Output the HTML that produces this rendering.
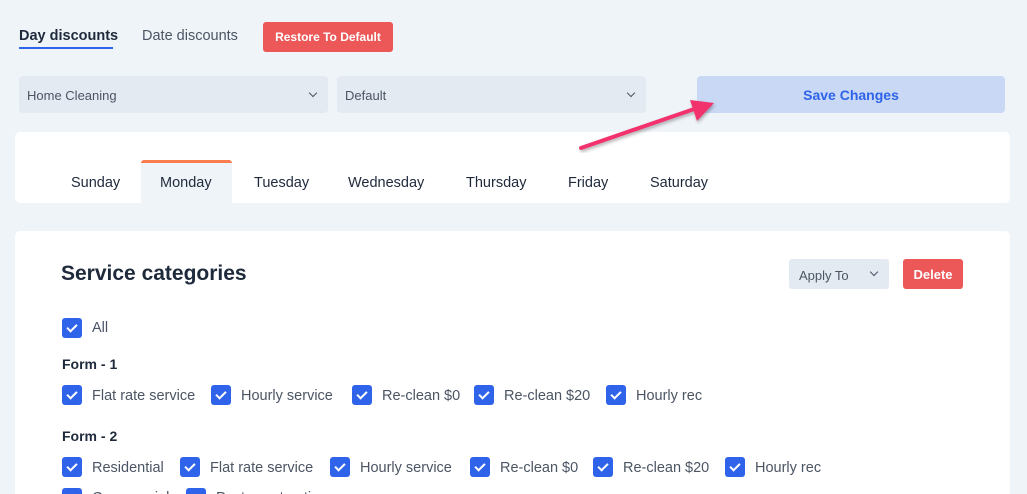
<!DOCTYPE html><html><head><style>
*{margin:0;padding:0;box-sizing:border-box}
html,body{width:1027px;height:494px;overflow:hidden}
body{background:#eff4f9;font-family:"Liberation Sans",sans-serif;position:relative;color:#1e2a3b}
.a{position:absolute;white-space:nowrap}
.sel{position:absolute;background:#e3eaf2;border-radius:4px;height:37px;font-size:13px;color:#4b5563;padding:12px 8px}
.chev{position:absolute;right:12px;top:14px;width:6px;height:6px;border-right:1.5px solid #4b5563;border-bottom:1.5px solid #4b5563;transform:rotate(45deg)}
.card{position:absolute;background:#fff;border-radius:5px}
.day{position:absolute;top:175px;font-size:14.5px;color:#1e2a3b}
.cb{position:absolute;width:20px;height:20px;background:#2e63ea;border-radius:3px}
.cb:after{content:"";position:absolute;left:7px;top:4px;width:4px;height:8px;border-right:2px solid #fff;border-bottom:2px solid #fff;transform:rotate(45deg)}
.lb{position:absolute;font-size:14.5px;color:#4b5563}
.h{position:absolute;font-size:14px;font-weight:bold;color:#1e2a3b}
</style></head><body>
<div class="a" style="left:19px;top:28px;font-size:14.5px;font-weight:bold">Day discounts</div>
<div class="a" style="left:19px;top:47px;width:94px;height:2px;background:#2e63ea"></div>
<div class="a" style="left:142px;top:28px;font-size:14.5px;color:#4b5563">Date discounts</div>
<div class="a" style="left:263px;top:22px;width:130px;height:30px;background:#ec5858;border-radius:3px;color:#fff;font-weight:bold;font-size:12px;text-align:center;line-height:31px">Restore To Default</div>
<div class="sel" style="left:19px;top:76px;width:309px">Home Cleaning<span class="chev"></span></div>
<div class="sel" style="left:337px;top:76px;width:309px">Default<span class="chev"></span></div>
<div class="a" style="left:697px;top:76px;width:308px;height:37px;background:#c8d8f5;border-radius:4px;color:#2e63ea;font-weight:bold;font-size:14px;text-align:center;line-height:39px">Save Changes</div>
<div class="card" style="left:15px;top:132px;width:995px;height:71px"></div>
<div class="a" style="left:141px;top:160px;width:91px;height:43px;background:#eff4f9;border-top:3px solid #fb7c4e;border-radius:3px 3px 0 0"></div>
<div class="day" style="left:71px">Sunday</div>
<div class="day" style="left:160px">Monday</div>
<div class="day" style="left:254px">Tuesday</div>
<div class="day" style="left:348px">Wednesday</div>
<div class="day" style="left:466px">Thursday</div>
<div class="day" style="left:568px">Friday</div>
<div class="day" style="left:650px">Saturday</div>
<svg class="a" style="left:0;top:0" width="1027" height="494"><defs><filter id="s"><feDropShadow dx="1" dy="2" stdDeviation="1.5" flood-opacity=".3"/></filter></defs><g filter="url(#s)" stroke="#f1336d" fill="#f1336d"><line x1="581" y1="148" x2="700" y2="107" stroke-width="4" stroke-linecap="round"/><polygon points="714,103 690,100 697,121" stroke="none"/></g></svg>
<div class="card" style="left:15px;top:231px;width:995px;height:263px;border-radius:5px 5px 0 0"></div>
<div class="a" style="left:61px;top:262px;font-size:21px;font-weight:bold;color:#1e2a3b">Service categories</div>
<div class="a" style="left:789px;top:259px;width:100px;height:30px;background:#e3eaf2;border-radius:3px;font-size:13px;color:#4b5563;padding:9px 10px">Apply To<span class="chev" style="top:10px;right:12px"></span></div>
<div class="a" style="left:903px;top:259px;width:60px;height:30px;background:#ec5858;border-radius:3px;color:#fff;font-weight:bold;font-size:13px;text-align:center;line-height:31px">Delete</div>
<div class="cb" style="left:62px;top:318px"></div><div class="lb" style="left:92px;top:320px">All</div>
<div class="h" style="left:62px;top:356px">Form - 1</div>
<div class="cb" style="left:62px;top:385px"></div><div class="lb" style="left:92px;top:388px">Flat rate service</div>
<div class="cb" style="left:211px;top:385px"></div><div class="lb" style="left:241px;top:388px">Hourly service</div>
<div class="cb" style="left:352px;top:385px"></div><div class="lb" style="left:382px;top:388px">Re-clean $0</div>
<div class="cb" style="left:474px;top:385px"></div><div class="lb" style="left:504px;top:388px">Re-clean $20</div>
<div class="cb" style="left:606px;top:385px"></div><div class="lb" style="left:636px;top:388px">Hourly rec</div>
<div class="h" style="left:62px;top:428px">Form - 2</div>
<div class="cb" style="left:62px;top:457px"></div><div class="lb" style="left:92px;top:460px">Residential</div>
<div class="cb" style="left:180px;top:457px"></div><div class="lb" style="left:210px;top:460px">Flat rate service</div>
<div class="cb" style="left:330px;top:457px"></div><div class="lb" style="left:360px;top:460px">Hourly service</div>
<div class="cb" style="left:470px;top:457px"></div><div class="lb" style="left:500px;top:460px">Re-clean $0</div>
<div class="cb" style="left:593px;top:457px"></div><div class="lb" style="left:623px;top:460px">Re-clean $20</div>
<div class="cb" style="left:725px;top:457px"></div><div class="lb" style="left:755px;top:460px">Hourly rec</div>
<div class="cb" style="left:62px;top:488px"></div><div class="lb" style="left:92px;top:490px">Commercial</div>
<div class="cb" style="left:186px;top:488px"></div><div class="lb" style="left:216px;top:490px">Post construction</div>
</body></html>
